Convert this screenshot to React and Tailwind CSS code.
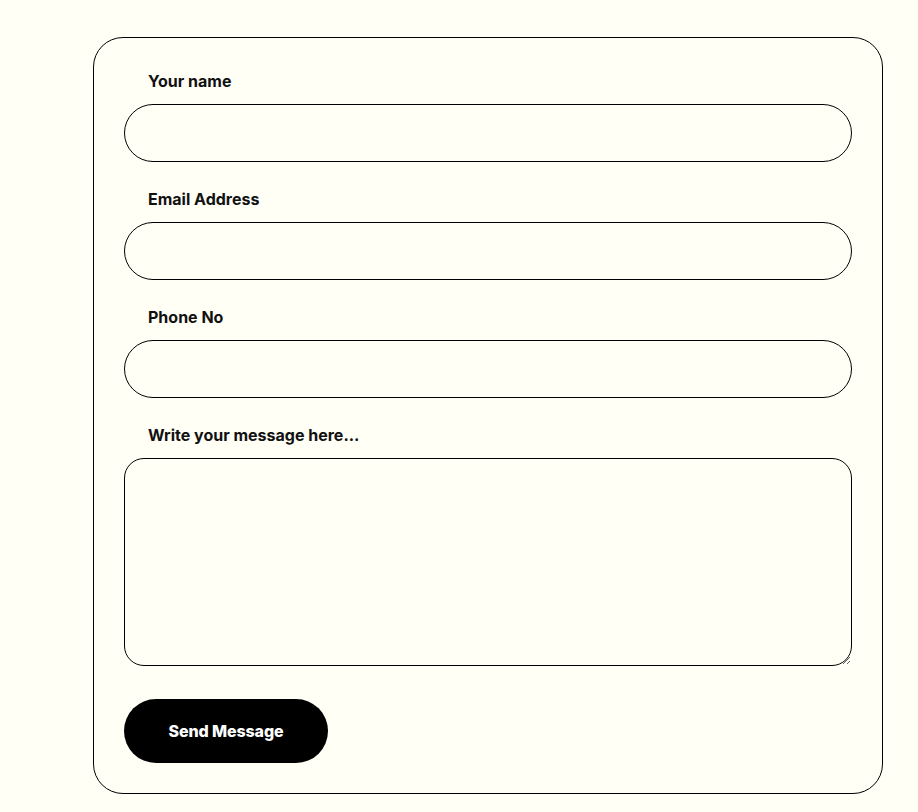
export default function App() {
  const fields = ["Your name", "Email Address", "Phone No"];
  return (
    <div className="min-h-[812px] w-full bg-[#fffff6] pt-[37px] pb-[18px]" style={{ fontFamily: "Inter, 'Liberation Sans', sans-serif" }}>
      <form className="ml-[93px] w-[790px] rounded-[30px] border border-black px-[30px] pt-[33px] pb-[30px]" onSubmit={(e) => e.preventDefault()}>
        <div className="flex flex-col gap-[27px]">
          {fields.map((f) => (
            <div key={f} className="flex flex-col">
              <label className="pl-6 text-[16px] leading-5 font-bold text-[#111] mb-[13px]">{f}</label>
              <input className="h-[58px] w-full rounded-full border border-black bg-transparent px-6 outline-none" />
            </div>
          ))}
          <div className="flex flex-col">
            <label className="pl-6 text-[16px] leading-5 font-bold text-[#111] mb-[13px]">Write your message here...</label>
            <textarea className="h-[208px] w-full rounded-[20px] border border-black bg-transparent px-6 py-4 outline-none" />
          </div>
        </div>
        <button className="mt-[33px] h-[64px] w-[204px] rounded-full bg-black text-[16px] font-extrabold tracking-[-0.1px] text-white">
          Send Message
        </button>
      </form>
    </div>
  );
}
